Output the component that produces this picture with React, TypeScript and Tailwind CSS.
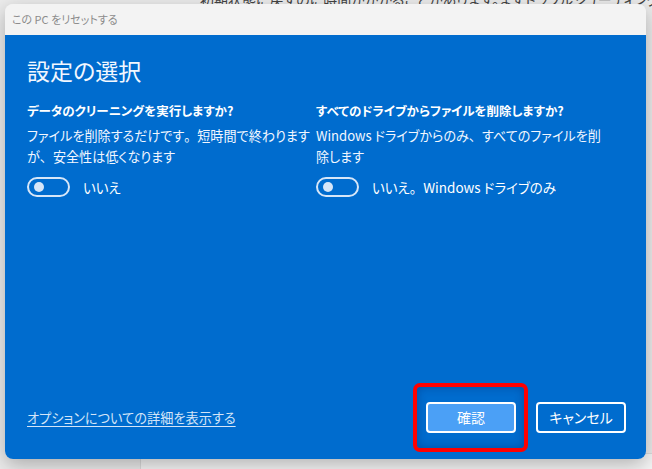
import React from "react";

const jp = {
  fontFamily: '"Noto Sans CJK JP", "Noto Sans", sans-serif',
  fontFeatureSettings: '"palt"',
};

function Toggle() {
  return (
    <div className="flex h-[20px] w-[43px] items-center rounded-full border-2 border-[#d6e6f8] pl-[5px]">
      <div className="h-[10px] w-[10px] rounded-full bg-[#d6e6f8]" />
    </div>
  );
}

function P({ c }: { c: string }) {
  return <span className="[font-feature-settings:normal]">{c}</span>;
}

export default function App() {
  return (
    <div
      className="relative h-[469px] w-[652px] overflow-hidden bg-[#ececec]"
      style={jp}
    >
      {/* background settings page */}
      <div className="mt-[-10px] ml-[200px] whitespace-nowrap text-[14px] leading-[18px] text-[#444]">
        初期状態に戻すのに時間がかかることがあります。まずトラブルシューティング ツールを実行して問題を
      </div>
      <div className="ml-[140px] mt-[445px] h-[20px] w-[540px] rounded-[4px] border border-[#dcdcdc] bg-[#f6f6f6]" />

      {/* dialog window */}
      <div className="absolute left-[5px] top-[4px] flex h-[455px] w-[641px] flex-col overflow-hidden rounded-[8px] shadow-[0_6px_20px_rgba(0,0,0,0.28)]">
        <div className="flex h-[31px] items-center bg-[#f3f3f3] pl-[7px] text-[11px] text-[#8c8c8c]">
          この PC をリセットする
        </div>
        <div className="relative flex flex-1 flex-col bg-[#006cce] pl-[22px] pr-[20px] pb-[26px] text-white">
          <div className="mt-[20px] text-[23px] leading-[30px] text-[#f2f7ff]">
            設定の選択
          </div>
          <div className="mt-[16px] grid grid-cols-[289px_1fr]">
            <div className="flex flex-col">
              <div className="text-[12.5px] font-bold leading-[20px]">
                データのクリーニングを実行しますか?
              </div>
              <div className="mt-[4px] whitespace-nowrap text-[13.1px] leading-[21px] text-[#f2f7ff]">
                ファイルを削除するだけです<P c="。" />短時間で終わります
                <br />
                が<P c="、" />安全性は低くなります
              </div>
              <div className="mt-[10px] flex items-center gap-[13px]">
                <Toggle />
                <span className="text-[13.5px] leading-[20px]">いいえ</span>
              </div>
            </div>
            <div className="flex flex-col">
              <div className="text-[12.5px] font-bold leading-[20px]">
                すべてのドライブからファイルを削除しますか?
              </div>
              <div className="mt-[4px] whitespace-nowrap text-[13.1px] leading-[21px] text-[#f2f7ff]">
                Windows ドライブからのみ<P c="、" />すべてのファイルを削
                <br />
                除します
              </div>
              <div className="mt-[10px] flex items-center gap-[13px]">
                <Toggle />
                <span className="text-[13.5px] leading-[20px]">
                  いいえ<P c="。" />Windows ドライブのみ
                </span>
              </div>
            </div>
          </div>

          <div className="mt-auto flex items-center">
            <span className="text-[13.2px] leading-[20px] text-[#d4e5f8] underline underline-offset-[3px]">
              オプションについての詳細を表示する
            </span>
            <div className="ml-auto flex items-center gap-[20px]">
              <div className="relative">
                <div className="pointer-events-none absolute left-[-13px] top-[-19px] h-[69px] w-[115px] rounded-[7px] border-[4px] border-[#ff0000] shadow-[inset_0_0_10px_rgba(0,40,110,0.45)]" />
                <button className="flex h-[31px] w-[90px] items-center justify-center rounded-[4px] border-2 border-white bg-[#4ba0f6] text-[14px] text-white">
                  確認
                </button>
              </div>
              <button className="flex h-[31px] w-[90px] items-center justify-center rounded-[4px] border-2 border-white bg-transparent text-[14px] text-white">
                キャンセル
              </button>
            </div>
          </div>
        </div>
      </div>
    </div>
  );
}
